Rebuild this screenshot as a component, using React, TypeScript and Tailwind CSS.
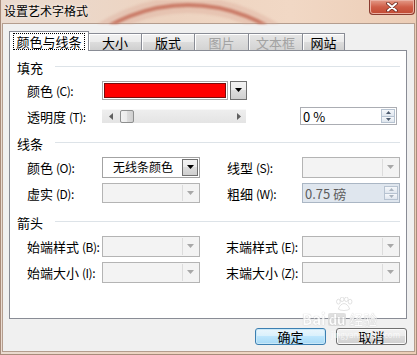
import React from "react";

function Down({ color = "#000" }: { color?: string }) {
  return (
    <svg width="7" height="4" viewBox="0 0 7 4">
      <path d="M0 0H7L3.5 4Z" fill={color} />
    </svg>
  );
}
function SmallDown({ color }: { color: string }) {
  return (
    <svg width="5" height="3" viewBox="0 0 5 3">
      <path d="M0 0H5L2.5 3Z" fill={color} />
    </svg>
  );
}
function SmallUp({ color }: { color: string }) {
  return (
    <svg width="5" height="3" viewBox="0 0 5 3">
      <path d="M0 3H5L2.5 0Z" fill={color} />
    </svg>
  );
}

function Lbl({ t, a }: { t: string; a: string }) {
  return (
    <div className="w-[75px] shrink-0 whitespace-nowrap text-[13px] leading-none text-black">
      {t}
      <span className="ml-[3px] text-[12px] tracking-[-0.5px]">({a}):</span>
    </div>
  );
}

function Combo({ text, disabled, h }: { text?: string; disabled?: boolean; h: string }) {
  if (disabled) {
    return (
      <div className={`flex ${h} w-[98px] shrink-0 items-stretch border border-[#b4b4b4] bg-[#f3f3f3] p-[1px]`}>
        <div className="flex-1" />
        <div className="flex w-[16px] items-center justify-center border-l border-[#dcdcdc]">
          <Down color="#a8a8a8" />
        </div>
      </div>
    );
  }
  return (
    <div className={`flex ${h} w-[98px] shrink-0 items-stretch border border-[#a3a3a3] bg-white p-[1px]`}>
      <div className="flex flex-1 items-center justify-center text-[12px] leading-none text-black">{text}</div>
      <div className="flex w-[16px] items-center justify-center border border-[#707070] bg-[linear-gradient(#f2f2f2,#ebebeb_50%,#dddddd_50%,#cfcfcf)]">
        <Down color="#000" />
      </div>
    </div>
  );
}

function Spin({ text, disabled, w, h }: { text: string; disabled?: boolean; w: string; h: string }) {
  return (
    <div
      className={`flex ${w} ${h} shrink-0 items-center border ${
        disabled ? "border-[#aab6c4] bg-[#dfe6ee] text-[#5c5c5c]" : "border-[#abadb3] bg-white text-black"
      } pl-[2px] pr-[1px]`}
    >
      <div className="flex-1 whitespace-pre text-[13px] leading-none">{text}</div>
      <div className="flex h-[14px] w-[14px] flex-col">
        <div className="flex flex-1 items-center justify-center border border-[#b7c3d1] bg-gradient-to-b from-[#f6f8fb] to-[#dfe6ee]">
          <SmallUp color={disabled ? "#a9b3be" : "#4d5b6e"} />
        </div>
        <div className="flex flex-1 items-center justify-center border border-t-0 border-[#b7c3d1] bg-gradient-to-b from-[#f6f8fb] to-[#dfe6ee]">
          <SmallDown color={disabled ? "#a9b3be" : "#4d5b6e"} />
        </div>
      </div>
    </div>
  );
}

function Header({ t, mt }: { t: string; mt: string }) {
  return (
    <div className={`flex h-[18px] items-center pl-[7px] ${mt}`}>
      <span className="text-[13px] leading-none text-black">{t}</span>
      <div className="mb-[2px] ml-[12px] mr-[6px] h-px flex-1 bg-[#dde3e8]" />
    </div>
  );
}

function Tab({ t, disabled, w }: { t: string; disabled?: boolean; w: string }) {
  return (
    <div
      className={`-ml-px flex h-[17px] ${w} items-center justify-center border border-b-0 border-[#898c95] ${
        disabled
          ? "bg-gradient-to-b from-[#e6e6e6] to-[#d3d3d3] text-[#a3a3a3]"
          : "bg-[linear-gradient(#f2f2f2,#ebebeb_50%,#dddddd_50%,#cfcfcf)] text-black"
      } pt-[1px] text-[13px] leading-none shadow-[inset_1px_1px_0_0_#ffffff]`}
    >
      {t}
    </div>
  );
}

const winBtn =
  "flex h-[17px] w-[71px] items-center justify-center rounded-[3px] border text-[13px] leading-none text-black";

export default function App() {
  return (
    <div className="relative flex h-[355px] w-[417px] flex-col overflow-hidden border-x border-b border-[#a88c7b] bg-[linear-gradient(90deg,#eadbd0,#edd3c0_40%,#f1d8c5_70%,#eccdb6)] font-['Noto_Sans_CJK_SC','Noto_Sans',sans-serif]">
      {/* backdrop arc seen through the glass frame */}
      <svg className="pointer-events-none absolute left-0 top-0 blur-[1px]" width="417" height="24" viewBox="0 0 417 24">
        <circle cx="187" cy="163" r="158" fill="none" stroke="#d9a595" strokeWidth="16" opacity="0.35" />
        <circle cx="187" cy="163" r="158" fill="none" stroke="#c5705c" strokeWidth="4" opacity="0.85" />
      </svg>

      {/* title bar */}
      <div className="relative flex h-[23px] shrink-0 items-start justify-between">
        <div className="ml-[3px] mt-[5px] text-[12px] leading-none text-black [text-shadow:0_0_4px_#ffffff]">
          设置艺术字格式
        </div>
        <div className="mr-[1px] flex h-[15px] w-[46px] items-center justify-center rounded-b-[4px] border border-t-0 border-[#8a3b2f] bg-gradient-to-b from-[#e39a88] via-[#cf5e48] to-[#c14a33] shadow-[inset_0_0_0_1px_#eab0a2]">
          <svg width="12" height="10" viewBox="0 0 12 10">
            <path d="M2 1.5L10 8.5M10 1.5L2 8.5" stroke="#6b2a20" strokeWidth="3.6" strokeLinecap="round" />
            <path d="M2 1.5L10 8.5M10 1.5L2 8.5" stroke="#ffffff" strokeWidth="2" strokeLinecap="round" />
          </svg>
        </div>
      </div>

      {/* client area */}
      <div className="mx-[1px] mb-[2px] flex flex-1 flex-col border border-[#b49d8e] bg-[#f0f0f0] pl-[6px] pt-[7px]">
        {/* tabs */}
        <div className="flex h-[19px] items-end">
          <div className="relative z-10 -mb-px flex h-[20px] w-[80px] items-center justify-center border border-b-0 border-[#898c95] bg-white">
            <span className="border border-dotted border-black px-[2px] py-[1px] text-[13px] leading-[13px] text-black">
              颜色与线条
            </span>
          </div>
          <Tab t="大小" w="w-[54px]" />
          <Tab t="版式" w="w-[54px]" />
          <Tab t="图片" w="w-[55px]" disabled />
          <Tab t="文本框" w="w-[55px]" disabled />
          <Tab t="网站" w="w-[43px]" />
        </div>

        {/* panel */}
        <div className="mr-[7px] h-[269px] border border-[#898c95] bg-white pt-[7px]">
          <Header t="填充" mt="" />
          <div className="mt-[1px] flex h-[26px] items-center pl-[17px]">
            <Lbl t="颜色" a="C" />
            <div className="flex h-[19px] w-[126px] border border-[#a9a9a9] bg-white p-[1px]">
              <div className="flex-1 border border-[#7a0b0b] bg-[#ff0000]" />
            </div>
            <div className="ml-[2px] flex h-[19px] w-[17px] items-center justify-center border border-[#707070] bg-[linear-gradient(#f2f2f2,#ebebeb_50%,#dddddd_50%,#cfcfcf)]">
              <Down color="#000" />
            </div>
          </div>
          <div className="flex h-[26px] items-center pl-[17px]">
            <Lbl t="透明度" a="T" />
            <div className="flex h-[14px] w-[144px] items-center border-t border-[#f8f8f8] bg-gradient-to-b from-[#eeeeee] to-[#e4e4e4]">
              <div className="flex w-[18px] justify-center">
                <svg width="4" height="7" viewBox="0 0 4 7">
                  <path d="M4 0V7L0 3.5Z" fill="#606060" />
                </svg>
              </div>
              <div className="h-[13px] w-[14px] rounded-[2px] border border-[#8e8f8f] bg-[linear-gradient(90deg,#f2f2f2,#ebebeb_50%,#dddddd_50%,#cfcfcf)]" />
              <div className="flex-1" />
              <div className="flex w-[15px] justify-center">
                <svg width="4" height="7" viewBox="0 0 4 7">
                  <path d="M0 0V7L4 3.5Z" fill="#606060" />
                </svg>
              </div>
            </div>
            <div className="ml-[54px]">
              <Spin text="0 %" w="w-[97px]" h="h-[18px]" />
            </div>
          </div>

          <Header t="线条" mt="mt-[5px]" />
          <div className="mt-[2px] flex h-[26px] items-center pl-[17px]">
            <Lbl t="颜色" a="O" />
            <Combo text="无线条颜色" h="h-[21px]" />
            <div className="ml-[27px]">
              <Lbl t="线型" a="S" />
            </div>
            <Combo disabled h="h-[21px]" />
          </div>
          <div className="flex h-[26px] items-center pl-[17px]">
            <Lbl t="虚实" a="D" />
            <Combo disabled h="h-[20px]" />
            <div className="ml-[27px]">
              <Lbl t="粗细" a="W" />
            </div>
            <Spin text="0.75 磅" disabled w="w-[98px]" h="h-[20px]" />
          </div>

          <Header t="箭头" mt="mt-[7px]" />
          <div className="mt-[2px] flex h-[26px] items-center pl-[17px]">
            <Lbl t="始端样式" a="B" />
            <Combo disabled h="h-[21px]" />
            <div className="ml-[26px] w-[76px]">
              <Lbl t="末端样式" a="E" />
            </div>
            <Combo disabled h="h-[21px]" />
          </div>
          <div className="flex h-[26px] items-center pl-[17px]">
            <Lbl t="始端大小" a="I" />
            <Combo disabled h="h-[21px]" />
            <div className="ml-[26px] w-[76px]">
              <Lbl t="末端大小" a="Z" />
            </div>
            <Combo disabled h="h-[21px]" />
          </div>
        </div>

        {/* buttons */}
        <div className="mt-[9px] flex justify-end gap-[10px] pr-[7px]">
          <button className={`${winBtn} border-[#3c7fb1] bg-[linear-gradient(#eaf6fd,#d9f0fc_50%,#bee6fd_50%,#a7d9f5)] shadow-[inset_0_0_0_1px_#c9e8f8]`}>
            确定
          </button>
          <button className={`${winBtn} border-[#707070] bg-[linear-gradient(#f2f2f2,#ebebeb_50%,#dddddd_50%,#cfcfcf)] shadow-[inset_0_0_0_1px_#fbfbfb]`}>
            取消
          </button>
        </div>
      </div>

      {/* Baidu watermark overlay */}
      <div className="pointer-events-none absolute left-[301px] top-[297px] flex flex-col items-start opacity-80">
        <svg width="22" height="14" viewBox="0 0 22 15" className="ml-[31px]">
          <g fill="#ffffff" stroke="#c8c8c8" strokeWidth="0.7">
            <ellipse cx="5" cy="5" rx="2" ry="2.6" />
            <ellipse cx="9" cy="2.5" rx="2" ry="2.4" />
            <ellipse cx="13.5" cy="2.5" rx="2" ry="2.4" />
            <ellipse cx="17.5" cy="5" rx="2" ry="2.6" />
            <path d="M5 13C6 9 9 7 11 7S16 9 17 13C15 15 7 15 5 13Z" />
          </g>
        </svg>
        <div className="flex items-end whitespace-nowrap text-[15px] font-bold leading-none text-white [text-shadow:0_0_1px_#9a9a9a]">
          <span>Bai</span>
          <span className="ml-[2px] rounded-[2px] bg-[#d8d8d8] px-[1px] text-[13px] text-white">du</span>
          <span className="ml-[3px] text-[14px] font-normal">经验</span>
        </div>
      </div>
      <div className="pointer-events-none absolute left-[330px] top-[331px] whitespace-nowrap text-[8px] leading-none text-white/70">
        jingyan.baidu.com
      </div>
    </div>
  );
}
